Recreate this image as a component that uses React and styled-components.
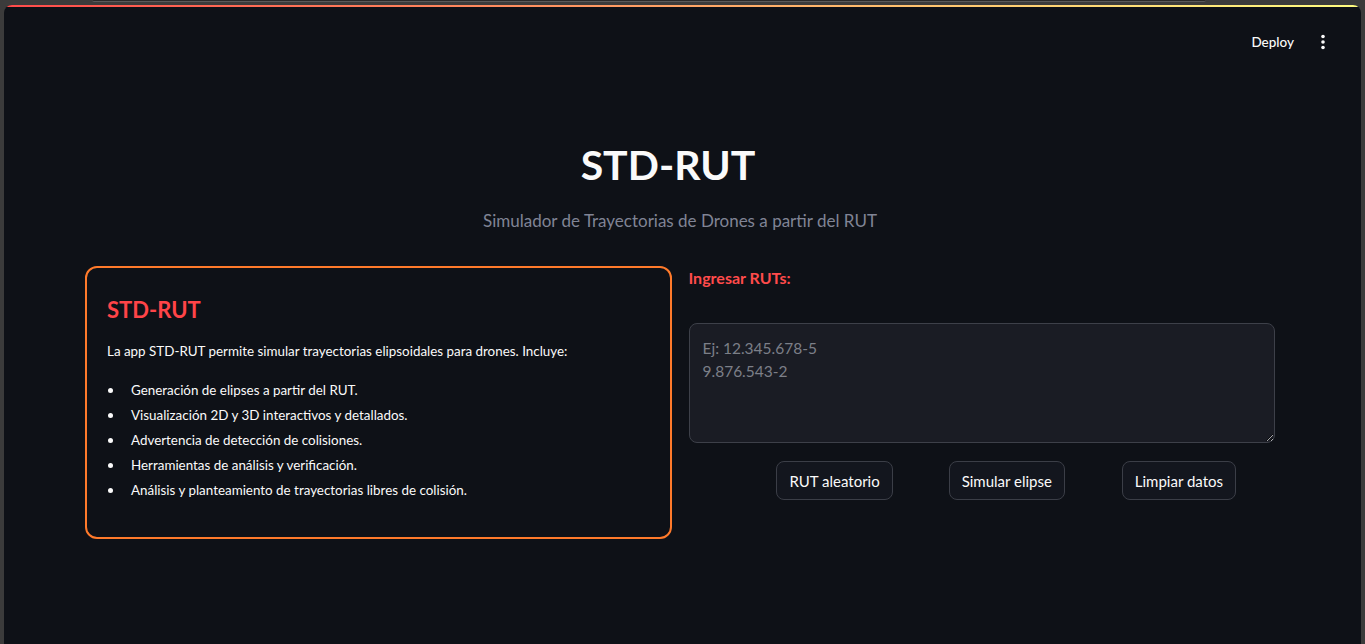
import React from "react";
import styled, { createGlobalStyle } from "styled-components";

const GlobalStyle = createGlobalStyle`
  html, body {
    margin: 0;
    padding: 0;
    background: #3b3b3b;
    height: 100%;
    overflow: hidden;
  }
  * { box-sizing: border-box; }
`;

const Shell = styled.div`
  height: 644px;
  display: flex;
  flex-direction: column;
  padding: 0 4px;
  font-family: Lato, "Noto Sans", sans-serif;
`;

const TopStrip = styled.div`
  height: 5px;
  flex: none;
  display: flex;
`;

const AddressEdge = styled.div`
  margin-left: 88px;
  width: 1114px;
  height: 2px;
  background: #2a2a2a;
  border-radius: 0 0 3px 3px;
  border-bottom: 1px solid #5a5a5a;
`;

const Frame = styled.div`
  flex: 1;
  background: #0e1117;
  border-radius: 8px 8px 0 0;
  overflow: hidden;
  display: flex;
  flex-direction: column;
`;

const Decoration = styled.div`
  height: 2px;
  flex: none;
  background: linear-gradient(90deg, #ff4b4b, #fffd80);
`;

const Header = styled.header`
  height: 70px;
  display: flex;
  align-items: center;
  justify-content: flex-end;
  gap: 21px;
  padding: 0 30px 0 0;
`;

const DeployButton = styled.span`
  color: #fafafa;
  font-size: 13.5px;
  font-weight: 500;
`;

const Kebab = styled.span`
  width: 16px;
  display: flex;
  justify-content: center;
  color: #fafafa;
`;

const Main = styled.main`
  width: 1190px;
  margin-left: 81px;
  padding-top: 58px;
`;

const Title = styled.h1`
  margin: 0;
  padding-right: 24px;
  text-align: center;
  color: #fafafa;
  font-size: 41px;
  font-weight: 700;
  line-height: 60px;
`;

const Subtitle = styled.p`
  margin: 14px 0 0;
  text-align: center;
  color: #808495;
  font-size: 17px;
  line-height: 24px;
`;

const Columns = styled.div`
  margin-top: 33px;
  display: grid;
  grid-template-columns: 1fr 1fr;
  gap: 17px;
  align-items: start;
`;

const InfoCard = styled.section`
  border: 2px solid #ff7a2b;
  border-radius: 12px;
  padding: 28px 20px 34px;
  height: 273px;
`;

const CardTitle = styled.h2`
  margin: 0;
  color: #ff4448;
  font-size: 22px;
  font-weight: 700;
  line-height: 28px;
`;

const CardText = styled.p`
  margin: 17px 0 0;
  color: #fafafa;
  font-size: 13.4px;
  line-height: 20px;
`;

const FeatureList = styled.ul`
  margin: 17px 0 0;
  padding: 0;
  list-style: none;
  color: #fafafa;
  font-size: 13.4px;
  line-height: 25px;
`;

const FeatureItem = styled.li`
  display: flex;
  align-items: center;

  &::before {
    content: "";
    flex: none;
    width: 5px;
    height: 5px;
    border-radius: 50%;
    background: #fafafa;
    margin: 0 18px 0 1px;
  }
`;

const InputColumn = styled.section`
  display: flex;
  flex-direction: column;
`;

const InputLabel = styled.label`
  color: #ff4b4b;
  font-size: 16px;
  font-weight: 700;
  line-height: 24px;
`;

const RutArea = styled.textarea`
  margin-top: 33px;
  height: 120px;
  width: 100%;
  resize: vertical;
  background: #1a1c24;
  border: 1px solid #3d4049;
  border-radius: 8px;
  color: #fafafa;
  font-family: Lato, "Noto Sans", sans-serif;
  font-size: 15.5px;
  line-height: 23px;
  padding: 13px 13px;
  outline: none;

  &::placeholder {
    color: #7c7f88;
  }
`;

const ButtonRow = styled.div`
  margin-top: 18px;
  padding: 0 10px 0 60px;
  display: grid;
  grid-template-columns: repeat(3, 1fr);
  justify-items: center;
`;

const ActionButton = styled.button`
  height: 39px;
  padding: 0 12px;
  background: #13161e;
  border: 1px solid #3b3e47;
  border-radius: 8px;
  color: #fafafa;
  font-family: Lato, "Noto Sans", sans-serif;
  font-size: 15px;
  cursor: pointer;
`;

const features = [
  "Generación de elipses a partir del RUT.",
  "Visualización 2D y 3D interactivos y detallados.",
  "Advertencia de detección de colisiones.",
  "Herramientas de análisis y verificación.",
  "Análisis y planteamiento de trayectorias libres de colisión.",
];

export default function App() {
  return (
    <>
      <GlobalStyle />
      <Shell>
        <TopStrip>
          <AddressEdge />
        </TopStrip>
        <Frame>
          <Decoration />
          <Header>
            <DeployButton>Deploy</DeployButton>
            <Kebab>
              <svg width="4" height="16" viewBox="0 0 4 16">
                <circle cx="2" cy="2.5" r="1.8" fill="currentColor" />
                <circle cx="2" cy="8" r="1.8" fill="currentColor" />
                <circle cx="2" cy="13.5" r="1.8" fill="currentColor" />
              </svg>
            </Kebab>
          </Header>
          <Main>
            <Title>STD-RUT</Title>
            <Subtitle>Simulador de Trayectorias de Drones a partir del RUT</Subtitle>
            <Columns>
              <InfoCard>
                <CardTitle>STD-RUT</CardTitle>
                <CardText>
                  La app STD-RUT permite simular trayectorias elipsoidales para drones. Incluye:
                </CardText>
                <FeatureList>
                  {features.map((f) => (
                    <FeatureItem key={f}>{f}</FeatureItem>
                  ))}
                </FeatureList>
              </InfoCard>
              <InputColumn>
                <InputLabel>Ingresar RUTs:</InputLabel>
                <RutArea placeholder={"Ej: 12.345.678-5\n9.876.543-2"} />
                <ButtonRow>
                  <ActionButton>RUT aleatorio</ActionButton>
                  <ActionButton>Simular elipse</ActionButton>
                  <ActionButton>Limpiar datos</ActionButton>
                </ButtonRow>
              </InputColumn>
            </Columns>
          </Main>
        </Frame>
      </Shell>
    </>
  );
}
